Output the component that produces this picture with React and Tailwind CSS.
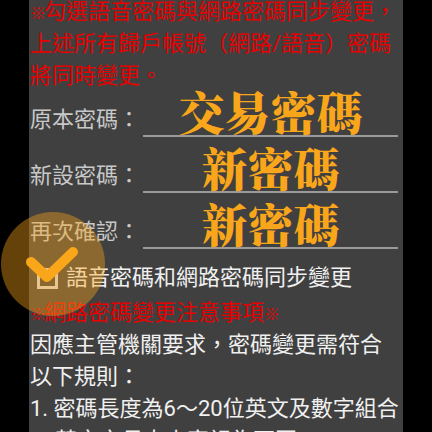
const sans = "font-['Roboto','Noto_Sans_CJK_TC',sans-serif]";

function Mark() {
  return <span className="text-[16px] leading-none tracking-[-2px]">※</span>;
}

function Row({ label, value, height }) {
  return (
    <div className={`flex items-end ${height}`}>
      <div className="w-[113px] shrink-0 pb-[1px] text-[22px] leading-[32px] text-[#c8c8c8]">{label}</div>
      <div className="flex h-full w-[255px] items-end justify-center border-b-2 border-[#9a9a9a] pb-[7px]">
        <span className="font-['Noto_Serif_CJK_TC','Noto_Sans_CJK_TC',serif] text-[46px] leading-[36px] font-black text-[#f9a61a]">{value}</span>
      </div>
    </div>
  );
}

export default function App() {
  return (
    <div className={`relative h-[432px] w-[432px] overflow-hidden bg-black ${sans}`}>
      <div className="mx-auto -mt-[4px] h-[440px] w-[374px] bg-[#404040] pl-[1px]">
        <div className="text-[22px] leading-[32px] text-[#e60000]">
          <div className="whitespace-nowrap"><Mark />勾選語音密碼與網路密碼同步變更，</div>
          <div className="whitespace-nowrap">上述所有歸戶帳號（網路/語音）密碼</div>
          <div className="whitespace-nowrap">將同時變更。</div>
        </div>
        <Row label="原本密碼：" value="交易密碼" height="h-[45px]" />
        <Row label="新設密碼：" value="新密碼" height="h-[56px]" />
        <Row label="再次確認：" value="新密碼" height="h-[56px]" />
        <div className="mt-[13px] flex h-[32px] items-center">
          <div className="mr-[8px] ml-[7px] size-[21px] border-[3px] border-[#dcdcdc]" />
          <span className="text-[22px] leading-[32px] whitespace-nowrap text-[#f0f0f0]">語音密碼和網路密碼同步變更</span>
        </div>
        <div className="mt-[3px] text-[22px] leading-[32px] whitespace-nowrap text-[#e60000]"><Mark />網路密碼變更注意事項<Mark /></div>
        <div className="text-[22px] leading-[32px] text-[#f0f0f0]">
          <div className="whitespace-nowrap">因應主管機關要求，密碼變更需符合</div>
          <div className="whitespace-nowrap">以下規則：</div>
          <div className="whitespace-nowrap">1. 密碼長度為6～20位英文及數字組合</div>
          <div className="pl-[25px] whitespace-nowrap">英文字母大小寫視為不同</div>
        </div>
      </div>
      <div className="absolute top-[212px] left-[1px] size-[104px] rounded-full bg-[#f9a61a]/40" />
      <svg className="absolute top-[245px] left-[26px]" width="54" height="40" viewBox="0 0 54 40">
        <path d="M5 17 L21 32 L47 7" fill="none" stroke="#f9a61a" strokeWidth="10" strokeLinecap="round" strokeLinejoin="round" />
      </svg>
    </div>
  );
}
